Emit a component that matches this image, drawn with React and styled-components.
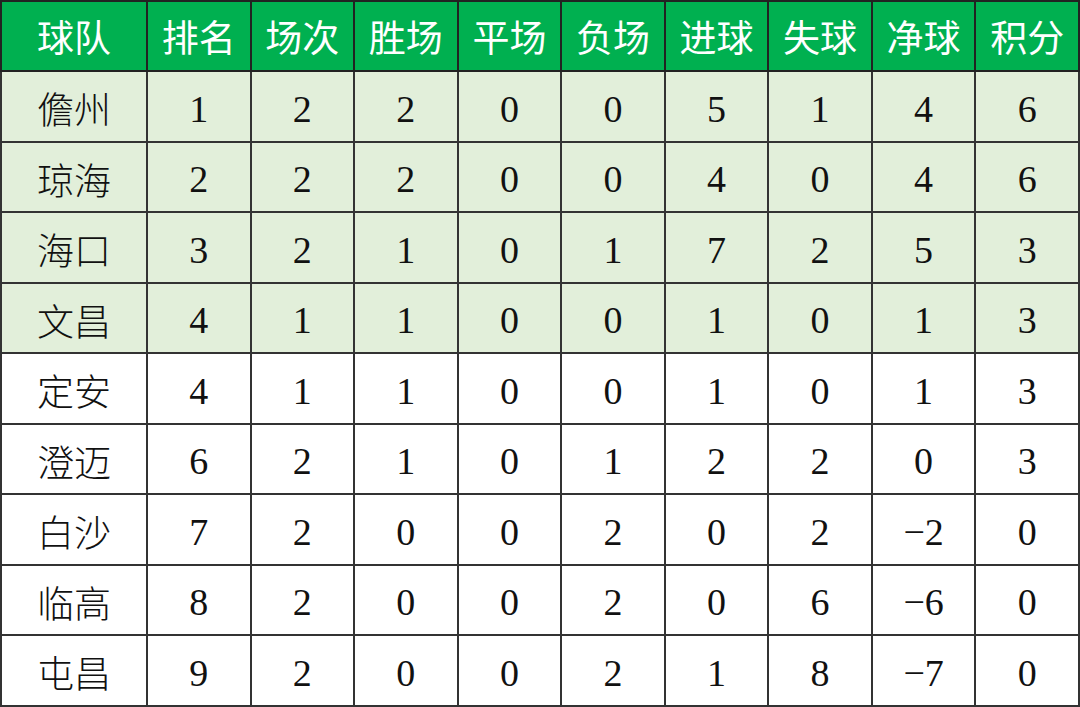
import React from 'react'
import styled, { createGlobalStyle } from 'styled-components'

const GlobalStyle = createGlobalStyle`
  html, body { margin: 0; padding: 0; background: #fff; }
`

const headers = ['球队', '排名', '场次', '胜场', '平场', '负场', '进球', '失球', '净球', '积分']

const rows = [
  ['儋州', 1, 2, 2, 0, 0, 5, 1, 4, 6],
  ['琼海', 2, 2, 2, 0, 0, 4, 0, 4, 6],
  ['海口', 3, 2, 1, 0, 1, 7, 2, 5, 3],
  ['文昌', 4, 1, 1, 0, 0, 1, 0, 1, 3],
  ['定安', 4, 1, 1, 0, 0, 1, 0, 1, 3],
  ['澄迈', 6, 2, 1, 0, 1, 2, 2, 0, 3],
  ['白沙', 7, 2, 0, 0, 2, 0, 2, -2, 0],
  ['临高', 8, 2, 0, 0, 2, 0, 6, -6, 0],
  ['屯昌', 9, 2, 0, 0, 2, 1, 8, -7, 0],
]

const Table = styled.table`
  width: 1080px;
  border-collapse: collapse;
  table-layout: fixed;
  font-family: "Liberation Serif", "Noto Sans CJK SC", serif;
`

const HeadCell = styled.th`
  height: 68px;
  background: #00b050;
  color: #fff;
  font-family: "Noto Sans CJK SC", sans-serif;
  font-weight: 400;
  font-size: 37px;
  line-height: 1;
  border: 2px solid #222;
  text-align: center;
  padding: 0;
`

const Row = styled.tr`
  background: ${p => (p.$top ? '#e2efda' : '#ffffff')};
`

const Cell = styled.td`
  height: 63.5px;
  border: 2px solid #333;
  text-align: center;
  padding: 5px 0 0;
  color: #111;
  line-height: 1;
  font-size: ${p => (p.$team ? '37px' : '38px')};
  font-family: ${p => (p.$team ? '"Noto Sans CJK SC", sans-serif' : '"Liberation Serif", serif')};
  font-weight: ${p => (p.$team ? 300 : 400)};
`

function fmt(v) {
  if (typeof v === 'number' && v < 0) return '\u2212' + Math.abs(v)
  return v
}

export default function App() {
  return (
    <>
      <GlobalStyle />
      <Table>
        <colgroup>
          <col style={{ width: 146 }} />
          {headers.slice(1).map(h => <col key={h} />)}
        </colgroup>
        <thead>
          <tr>
            {headers.map(h => <HeadCell key={h}>{h}</HeadCell>)}
          </tr>
        </thead>
        <tbody>
          {rows.map((r, i) => (
            <Row key={r[0]} $top={i < 4}>
              {r.map((v, j) => (
                <Cell key={j} $team={j === 0}>{fmt(v)}</Cell>
              ))}
            </Row>
          ))}
        </tbody>
      </Table>
    </>
  )
}
